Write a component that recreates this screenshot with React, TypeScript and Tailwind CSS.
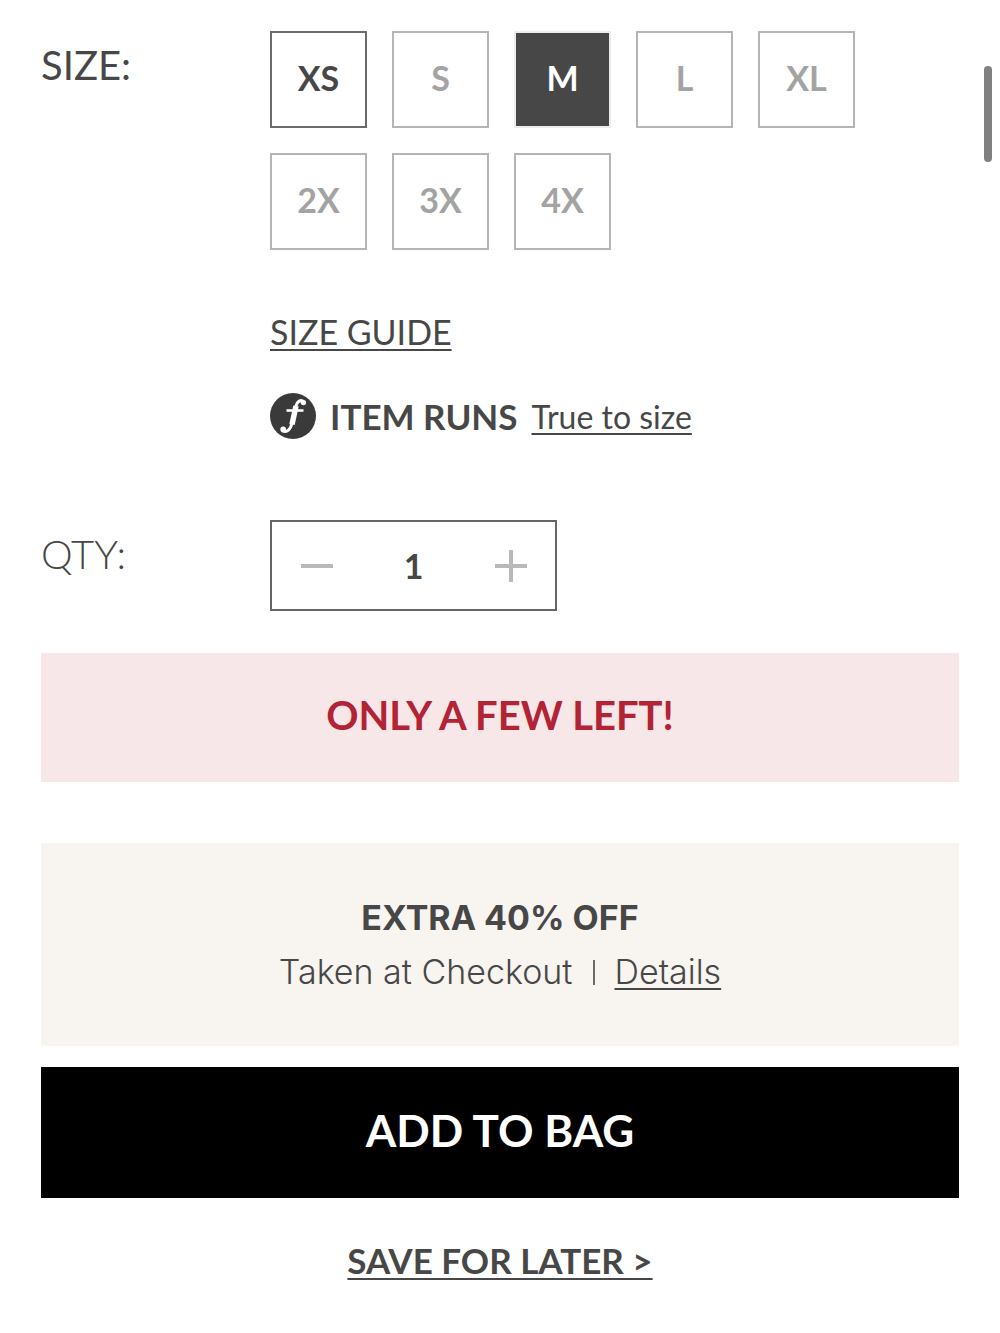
import { useState } from 'react';
import clsx from 'clsx';

const sizes = [
  { label: 'XS', available: true },
  { label: 'S', available: false },
  { label: 'M', available: true },
  { label: 'L', available: false },
  { label: 'XL', available: false },
  { label: '2X', available: false },
  { label: '3X', available: false },
  { label: '4X', available: false },
];

function FitIcon() {
  return (
    <svg viewBox="0 0 46 46" className="size-[46px] shrink-0" aria-hidden="true">
      <circle cx="23" cy="23" r="23" fill="#3a3a3a" />
      <g fill="none" stroke="#fff" strokeLinecap="round">
        <path d="M34 9C30.5 5.8 27 8.5 25.8 14L22 30C20.6 36.5 17 40 12.5 37.6" strokeWidth="3" />
        <path d="M26 13L22 31.5" strokeWidth="5.5" strokeLinecap="butt" />
        <path d="M16.5 17.5H33.5" strokeWidth="2.6" strokeLinecap="butt" />
      </g>
      <circle cx="33.4" cy="9.6" r="2.7" fill="#fff" />
      <circle cx="13.2" cy="36.4" r="2.8" fill="#fff" />
    </svg>
  );
}

function SizePicker() {
  const [selected, setSelected] = useState('M');

  return (
    <div role="group" aria-labelledby="size-label" className="flex flex-wrap gap-[25px]">
      {sizes.map(({ label, available }) => (
        <button
          key={label}
          type="button"
          aria-pressed={selected === label}
          onClick={() => setSelected(label)}
          className={clsx(
            'flex size-[97px] items-center justify-center border-2 pb-1 text-[34px] font-bold',
            selected === label && 'border-[#ececec] bg-[#474747] text-white',
            selected !== label && available && 'border-[#6b6b6b] text-[#474747]',
            selected !== label && !available && 'border-[#b5b5b5] text-[#a3a3a3]',
          )}
        >
          {label}
        </button>
      ))}
    </div>
  );
}

function QuantityPicker() {
  const [qty, setQty] = useState(1);

  return (
    <div className="flex h-[91px] w-[287px] items-center border-2 border-[#666] text-[#b9b9b9]">
      <button
        type="button"
        aria-label="Decrease quantity"
        onClick={() => setQty(Math.max(1, qty - 1))}
        className="flex h-full flex-1 items-center justify-center"
      >
        <svg viewBox="0 0 32 32" className="size-8" aria-hidden="true">
          <path d="M0 16H32" stroke="currentColor" strokeWidth="4" />
        </svg>
      </button>
      <input
        id="qty"
        type="text"
        inputMode="numeric"
        value={qty}
        onChange={(e) => setQty(Number(e.target.value) || 1)}
        className="w-[105px] text-center text-[34px] font-bold text-[#474747]"
      />
      <button
        type="button"
        aria-label="Increase quantity"
        onClick={() => setQty(qty + 1)}
        className="flex h-full flex-1 items-center justify-center"
      >
        <svg viewBox="0 0 32 32" className="size-8" aria-hidden="true">
          <path d="M0 16H32M16 0V32" stroke="currentColor" strokeWidth="4" />
        </svg>
      </button>
    </div>
  );
}

export default function App() {
  return (
    <div className="relative bg-white font-['Lato',sans-serif] text-[#474747]">
      <div className="absolute top-[66px] right-2 h-24 w-2 rounded-full bg-[#808080]" />

      <main className="flex flex-col px-[41px] pt-[31px] pb-10">
        <section className="flex">
          <h2 id="size-label" className="w-[229px] shrink-0 pt-[10px] text-[40px] leading-[48px] font-normal">
            SIZE:
          </h2>
          <div className="min-w-0 flex-1">
            <SizePicker />
            <a
              href="#size-guide"
              className="mt-[60px] inline-block text-[34px] leading-[44px] font-normal underline decoration-2 underline-offset-4"
            >
              SIZE GUIDE
            </a>
            <div className="mt-[39px] flex items-center">
              <FitIcon />
              <p className="ml-[14px] text-[35px] leading-[46px] font-bold">ITEM RUNS</p>
              <a
                href="#fit"
                className="ml-[14px] pt-[2px] text-[32px] leading-[44px] font-normal underline decoration-2 underline-offset-4"
              >
                True to size
              </a>
            </div>
          </div>
        </section>

        <section className="mt-[81px] flex">
          <label htmlFor="qty" className="w-[229px] shrink-0 pt-[10px] text-[40px] leading-[48px] font-light">
            QTY:
          </label>
          <QuantityPicker />
        </section>

        <p className="mt-[42px] bg-[#f8e7e9] pt-[38px] pb-[43px] text-center text-[40px] leading-[48px] font-bold text-[#b22335]">
          ONLY A FEW LEFT!
        </p>

        <section className="mt-[61px] bg-[#f8f4f0] pt-12 pb-[47px] text-center font-['Inter',sans-serif] text-[34px] leading-[54px]">
          <h3 className="font-bold">EXTRA 40% OFF</h3>
          <p className="flex items-center justify-center gap-5 font-light">
            Taken at Checkout
            <span className="h-[25px] w-[2px] bg-[#6b6b6b]" />
            <a href="#details" className="underline decoration-2 underline-offset-4">
              Details
            </a>
          </p>
        </section>

        <button
          type="button"
          className="mt-[21px] bg-black pt-[37px] pb-[42px] text-[44px] leading-[52px] font-bold text-white"
        >
          ADD TO BAG
        </button>

        <a
          href="#save"
          className="mt-10 self-center text-[35px] leading-[44px] font-bold underline decoration-2 underline-offset-4"
        >
          SAVE FOR LATER &gt;
        </a>
      </main>
    </div>
  );
}
